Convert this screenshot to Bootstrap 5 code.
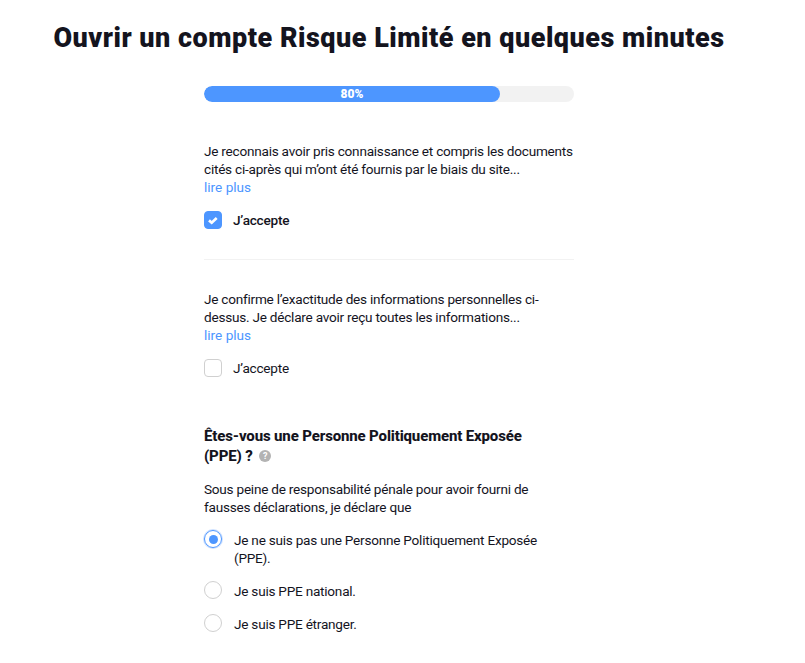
<!DOCTYPE html>
<html lang="fr"><head><meta charset="utf-8">
<link href="https://cdn.jsdelivr.net/npm/bootstrap@5.3.0/dist/css/bootstrap.min.css" rel="stylesheet">
<style>
body{background:#fff;color:#14141e;font-family:"Roboto",sans-serif;font-size:13.6px;line-height:18px;letter-spacing:-.24px;overflow:hidden}
.page{width:778px}
.ttl{font-size:27px;line-height:36px;font-weight:900;text-align:center;margin:20px 0 30px;color:#14141e;letter-spacing:.5px;white-space:nowrap}
.wrap{width:370px;margin:0 auto}
.prg{height:16px;border-radius:8px;background:#f2f2f2}
.prg .progress-bar{background:#4d96ff;border-radius:8px;font-size:12px;font-weight:900;letter-spacing:0}
.para{margin:40px 0 0}
.more{color:#4d96ff;text-decoration:none;display:block;letter-spacing:0}
.chk{margin-top:15px;gap:11px;align-items:center}
.box{width:18px;height:18px;border:1px solid #d0d0d0;border-radius:4px;flex:none;display:flex;align-items:center;justify-content:center}
.box.on{background:#4d96ff;border-color:#4d96ff}
.rd{width:18px;height:18px;border:1px solid #d0d0d0;border-radius:50%;flex:none;display:flex;align-items:center;justify-content:center}
.rd.on{border-color:#4d96ff;box-shadow:0 0 0 1px #cfe2ff}
.rd.on i{width:9px;height:9px;border-radius:50%;background:#4d96ff;display:block}
.sep{border-top:1px solid #f2f2f2;margin:30px 0;opacity:1}
.hd{font-size:15px;font-weight:800;line-height:20px;letter-spacing:-.15px;margin-top:49px;padding-right:30px}
.hint{width:12px;height:12px;border-radius:50%;background:#b3b3b3;color:#fff;font-size:9px;line-height:12px;display:inline-block;text-align:center;margin-left:3px;font-weight:700;letter-spacing:0;vertical-align:2px}
.intro{margin:14px 0 0}
.opt{display:flex;gap:12px;margin-top:14px}
.opt span:last-child{padding-top:1px}
</style></head><body>
<div class="page">
<h1 class="ttl">Ouvrir un compte Risque Limité en quelques minutes</h1>
<div class="wrap">
<div class="progress prg"><div class="progress-bar" style="width:80%">80%</div></div>
<p class="para">Je reconnais avoir pris connaissance et compris les documents cités ci-après qui m’ont été fournis par le biais du site...<a class="more" href="#">lire plus</a></p>
<div class="d-flex chk"><span class="box on"><svg width="12" height="12" viewBox="0 0 12 12"><path d="M2 6.4l2.7 2.3 5-4.6" fill="none" stroke="#fff" stroke-width="2.7"/></svg></span><span class="fw-medium">J’accepte</span></div>
<hr class="sep">
<p class="mb-0">Je confirme l’exactitude des informations personnelles ci-dessus. Je déclare avoir reçu toutes les informations...<a class="more" href="#">lire plus</a></p>
<div class="d-flex chk"><span class="box"></span><span>J’accepte</span></div>
<div class="hd">Êtes-vous une Personne Politiquement Exposée (PPE) ? <span class="hint">?</span></div>
<p class="intro">Sous peine de responsabilité pénale pour avoir fourni de fausses déclarations, je déclare que</p>
<div class="opt"><span class="rd on"><i></i></span><span>Je ne suis pas une Personne Politiquement Exposée (PPE).</span></div>
<div class="opt"><span class="rd"></span><span>Je suis PPE national.</span></div>
<div class="opt"><span class="rd"></span><span>Je suis PPE étranger.</span></div>
</div>
</div>
</body></html>
